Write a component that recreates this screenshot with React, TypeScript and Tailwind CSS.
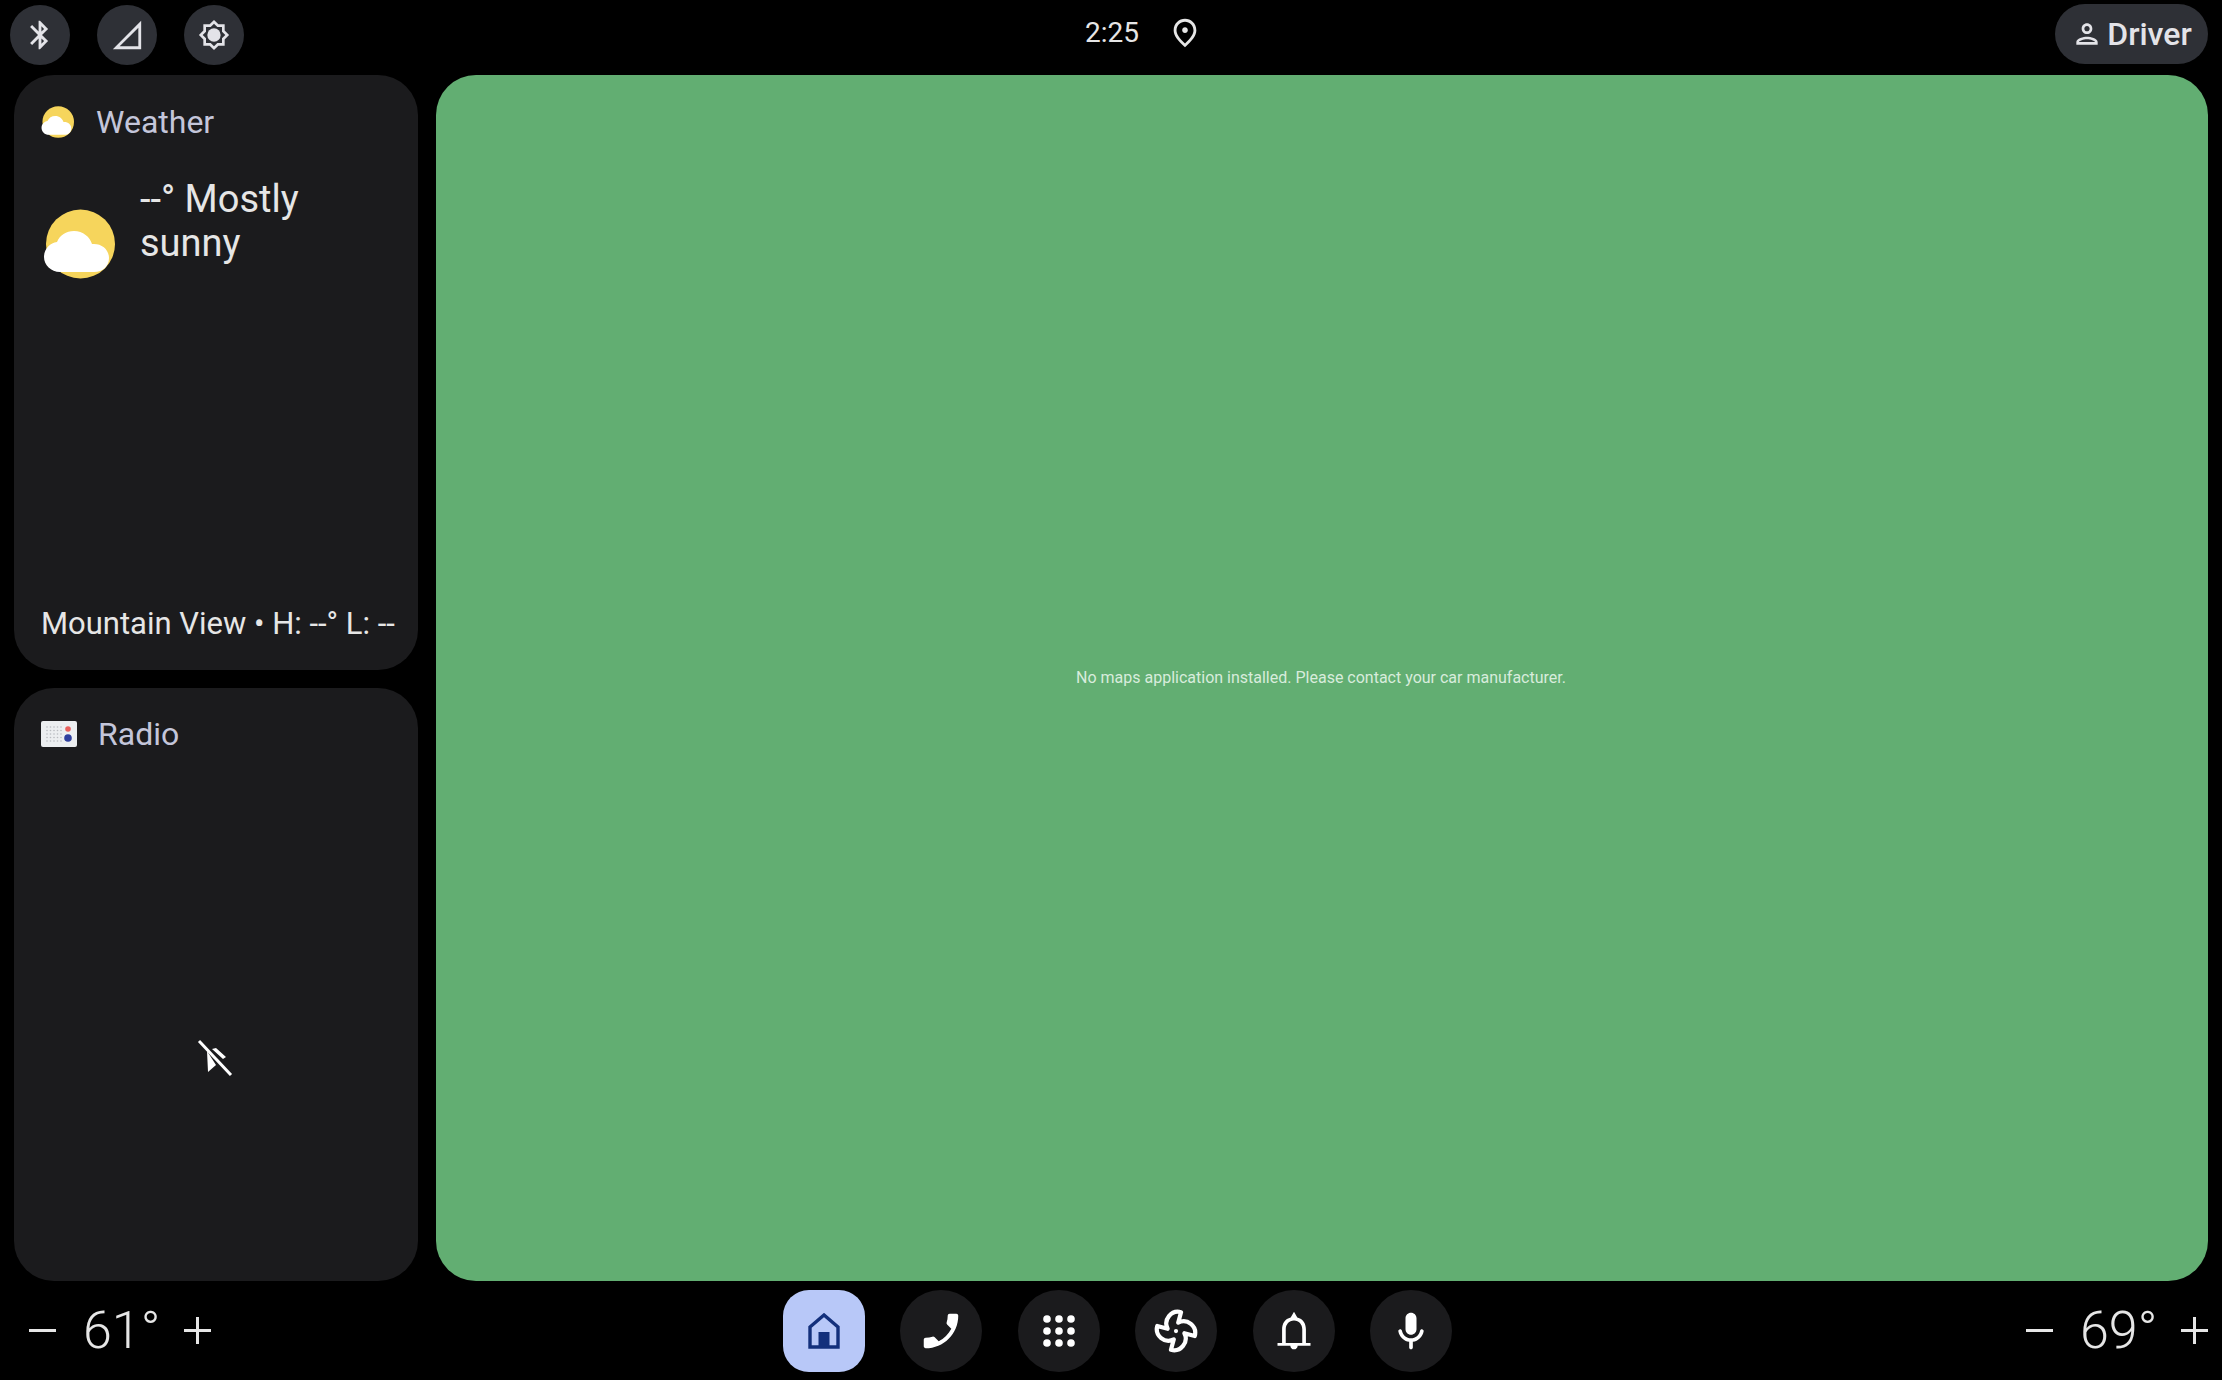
import { ReactNode } from "react";
import { Fan } from "lucide-react";

// Material-style glyphs, all on a 24 unit box
const ICONS = {
  bluetooth:
    "M17.71 7.71L12 2h-1v7.59L6.41 5 5 6.41 10.59 12 5 17.59 6.41 19 11 14.41V22h1l5.71-5.71-4.3-4.29 4.3-4.29zM13 5.83l1.88 1.88L13 9.59V5.83zm1.88 10.46L13 18.17v-3.76l1.88 1.88z",
  signal: "M2 22h20V2L2 22zm18-2H6.83L20 6.83V20z",
  brightness:
    "M20 8.69V4h-4.69L12 .69 8.69 4H4v4.69L.69 12 4 15.31V20h4.69L12 23.31 15.31 20H20v-4.69L23.31 12 20 8.69zm-2 5.79V18h-3.52L12 20.48 9.52 18H6v-3.52L3.52 12 6 9.52V6h3.52L12 3.52 14.48 6H18v3.52L20.48 12 18 14.48z",
  pin: "M12 12c-1.1 0-2-.9-2-2s.9-2 2-2 2 .9 2 2-.9 2-2 2zm6-1.8C18 6.57 15.35 4 12 4s-6 2.57-6 6.2c0 2.34 1.95 5.44 6 9.14 4.05-3.7 6-6.8 6-9.14zM12 2c4.2 0 8 3.22 8 8.2 0 3.32-2.67 7.25-8 11.8-5.33-4.55-8-8.48-8-11.8C4 5.22 7.8 2 12 2z",
  person:
    "M12 6c1.1 0 2 .9 2 2s-.9 2-2 2-2-.9-2-2 .9-2 2-2m0 10c2.7 0 5.8 1.29 6 2H6c.23-.72 3.31-2 6-2m0-12C9.79 4 8 5.79 8 8s1.79 4 4 4 4-1.79 4-4-1.79-4-4-4zm0 10c-2.67 0-8 1.34-8 4v2h16v-2c0-2.66-5.33-4-8-4z",
  phone:
    "M6.62 10.79c1.44 2.83 3.76 5.14 6.59 6.59l2.2-2.2c.27-.27.67-.36 1.02-.24 1.12.37 2.33.57 3.57.57.55 0 1 .45 1 1V20c0 .55-.45 1-1 1-9.39 0-17-7.61-17-17 0-.55.45-1 1-1h3.5c.55 0 1 .45 1 1 0 1.25.2 2.45.57 3.57.11.35.03.74-.25 1.02l-2.2 2.2z",
  bell: "M12 22c1.1 0 2-.9 2-2h-4c0 1.1.9 2 2 2zM21 18.5h-2.5V11c0-3.1-1.6-5.7-4.7-6.4L12 1.5l-1.8 3.1C7.1 5.3 5.5 7.900 5.500 11v7.500H3V20h18v-1.500zM16.500 18.500h-9V11c0-2.500 1.800-4.700 4.500-4.700s4.500 2.200 4.500 4.700v7.500z",
  mic: "M12 14c1.66 0 3-1.34 3-3V5c0-1.66-1.34-3-3-3S9 3.34 9 5v6c0 1.66 1.34 3 3 3zM17.910 11c-.49 0-.9.36-.98.85C16.520 14.200 14.470 16 12 16s-4.520-1.800-4.930-4.150c-.08-.49-.49-.85-.98-.85-.61 0-1.090.54-1 1.140.49 3 2.890 5.350 5.910 5.780V21c0 .55.45 1 1 1s1-.45 1-1v-3.080c3.020-.43 5.420-2.780 5.910-5.780.1-.6-.39-1.140-1-1.140z",
};

function Glyph({ d, className }: { d: string; className: string }) {
  return (
    <svg viewBox="0 0 24 24" fill="currentColor" className={className}>
      <path d={d} />
    </svg>
  );
}

function StatusButton({ children }: { children: ReactNode }) {
  return (
    <div className="flex h-[60px] w-[60px] items-center justify-center rounded-full bg-[#2e3036] text-[#e3e3e8]">
      {children}
    </div>
  );
}

function NavButton({ active, children }: { active?: boolean; children: ReactNode }) {
  return (
    <div
      className={
        active
          ? "flex h-[82px] w-[82px] items-center justify-center rounded-[26px] bg-[#b8c8f8] text-[#13307c]"
          : "flex h-[82px] w-[82px] items-center justify-center rounded-full bg-[#1b1b1d] text-white"
      }
    >
      {children}
    </div>
  );
}

function SunCloud({ className }: { className: string }) {
  return (
    <svg viewBox="0 0 74 70" className={className}>
      <circle cx="37.500" cy="35" r="34.500" fill="#f6d55c" />
      <path
        d="M17 63C8 63 1 56 1 48c0-8 6-14 13-15 3-7 9-11 17-11 9 0 16 6 18 13 9-1 17 5 17 14 0 8-6 14-15 14H17z"
        fill="#ffffff"
      />
    </svg>
  );
}

function RadioIcon() {
  return (
    <svg viewBox="0 0 36 26" className="h-[26px] w-[36px]">
      <rect width="36" height="26" rx="2" fill="#eceef0" />
      <g fill="#b9bcc0">
        {[0, 1, 2, 3, 4].map((r) =>
          [0, 1, 2, 3, 4].map((c) => <circle key={`${r}-${c}`} cx={6 + c * 3.500} cy={6 + r * 3.500} r="0.800" />)
        )}
      </g>
      <circle cx="27" cy="8" r="2.800" fill="#e8605c" />
      <circle cx="27" cy="17" r="3.800" fill="#2f3f9e" />
    </svg>
  );
}

function Climate({ value }: { value: string }) {
  return (
    <div className="flex items-center text-[#e6e6e6]">
      <span className="h-[3px] w-[27px] bg-[#e6e6e6]" />
      <span className="ml-[27px] w-[90px] text-[52px] leading-none font-light">{value}</span>
      <span className="relative ml-[11px] h-[27px] w-[27px]">
        <span className="absolute top-[12px] left-0 h-[3px] w-[27px] bg-[#e6e6e6]" />
        <span className="absolute top-0 left-[12px] h-[27px] w-[3px] bg-[#e6e6e6]" />
      </span>
    </div>
  );
}

export default function App() {
  return (
    <div className="flex h-[1380px] w-[2222px] flex-col overflow-hidden bg-black font-['Roboto',sans-serif]">
      {/* status bar */}
      <div className="relative flex h-[75px] shrink-0 items-start justify-between pt-[4px] pr-[14px] pl-[10px]">
        <div className="flex gap-[27px] pt-px">
          <StatusButton>
            <Glyph d={ICONS.bluetooth} className="h-[34px] w-[34px]" />
          </StatusButton>
          <StatusButton>
            <Glyph d={ICONS.signal} className="h-[34px] w-[34px]" />
          </StatusButton>
          <StatusButton>
            <svg viewBox="0 0 24 24" fill="currentColor" className="h-[32px] w-[32px]">
              <path d={ICONS.brightness} />
              <circle cx="12" cy="12" r="5" />
            </svg>
          </StatusButton>
        </div>
        <div className="absolute top-[16px] left-[1085px] flex items-center text-[#e6e6e6]">
          <span className="w-[83px] text-[28px] leading-[34px]">2:25</span>
          <Glyph d={ICONS.pin} className="h-[34px] w-[34px]" />
        </div>
        <div className="flex h-[60px] w-[153px] items-center justify-center gap-[4px] rounded-full bg-[#2e3036] text-[#e3e3e8]">
          <Glyph d={ICONS.person} className="h-[32px] w-[32px]" />
          <span className="text-[32px] leading-none font-medium">Driver</span>
        </div>
      </div>

      {/* cards and map */}
      <div className="flex h-[1206px] shrink-0 gap-[18px] pr-[14px] pl-[14px]">
        <div className="flex w-[404px] shrink-0 flex-col gap-[18px]">
          <section className="flex h-[595px] flex-col rounded-[40px] bg-[#1b1b1d] px-[27px]">
            <div className="flex h-[94px] items-center gap-[21px]">
              <SunCloud className="h-[32px] w-[34px] shrink-0" />
              <span className="text-[32px] text-[#c4c6da]">Weather</span>
            </div>
            <div className="flex items-start pt-[10px] pl-[2px]">
              <SunCloud className="mt-[30px] h-[70px] w-[74px] shrink-0" />
              <div className="mt-[-2px] ml-[23px] w-[250px] text-[38px] leading-[44px] text-[#e6e6e6]">--° Mostly sunny</div>
            </div>
            <div className="mt-auto mb-[24px] text-[31px] leading-[44px] whitespace-nowrap text-[#e6e6e6]">
              Mountain View • H: --° L: --
            </div>
          </section>
          <section className="relative h-[593px] rounded-[40px] bg-[#1b1b1d] px-[27px]">
            <div className="flex h-[92px] items-center gap-[21px]">
              <RadioIcon />
              <span className="text-[32px] text-[#c4c6da]">Radio</span>
            </div>
            {/* crossed-out pointer left on the screen */}
            <svg viewBox="0 0 36 40" className="absolute top-[351px] left-[183px] h-[40px] w-[36px]">
              <path d="M10 12 L11 33 L19 26 Z M15 10 L26 20 L29 18 L19 9 Z" fill="#ffffff" />
              <path d="M2 2 L34 36" stroke="#ffffff" strokeWidth="3" />
            </svg>
          </section>
        </div>
        <main className="flex flex-1 items-center justify-center rounded-[40px] bg-[#62ae72] pb-[0px]">
          <p className="mr-[-8px] mb-[0px] pr-[10px] text-[16px] text-[#d8ecdc]">
            No maps application installed. Please contact your car manufacturer.
          </p>
        </main>
      </div>

      {/* bottom bar */}
      <div className="flex h-[99px] shrink-0 items-center justify-between pr-[14px] pl-[29px]">
        <Climate value="61°" />
        <div className="flex gap-[35.500px] pt-[1px] pr-[2px]">
          <NavButton active>
            <svg viewBox="0 0 32 36" className="h-[36px] w-[32px]">
              <path d="M16 2 L2 14 V34 H30 V14 Z" fill="none" stroke="currentColor" strokeWidth="3.400" />
              <rect x="10.500" y="19" width="11" height="15" fill="currentColor" />
            </svg>
          </NavButton>
          <NavButton>
            <Glyph d={ICONS.phone} className="h-[46px] w-[46px] -scale-x-100" />
          </NavButton>
          <NavButton>
            <svg viewBox="0 0 32 32" fill="currentColor" className="h-[32px] w-[32px]">
              {[4, 16, 28].map((y) =>
                [4, 16, 28].map((x) => <circle key={`${x}-${y}`} cx={x} cy={y} r="3.800" />)
              )}
            </svg>
          </NavButton>
          <NavButton>
            <Fan className="h-[46px] w-[46px]" strokeWidth={2.200} />
          </NavButton>
          <NavButton>
            <Glyph d={ICONS.bell} className="h-[44px] w-[44px]" />
          </NavButton>
          <NavButton>
            <Glyph d={ICONS.mic} className="h-[44px] w-[44px]" />
          </NavButton>
        </div>
        <Climate value="69°" />
      </div>
    </div>
  );
}
